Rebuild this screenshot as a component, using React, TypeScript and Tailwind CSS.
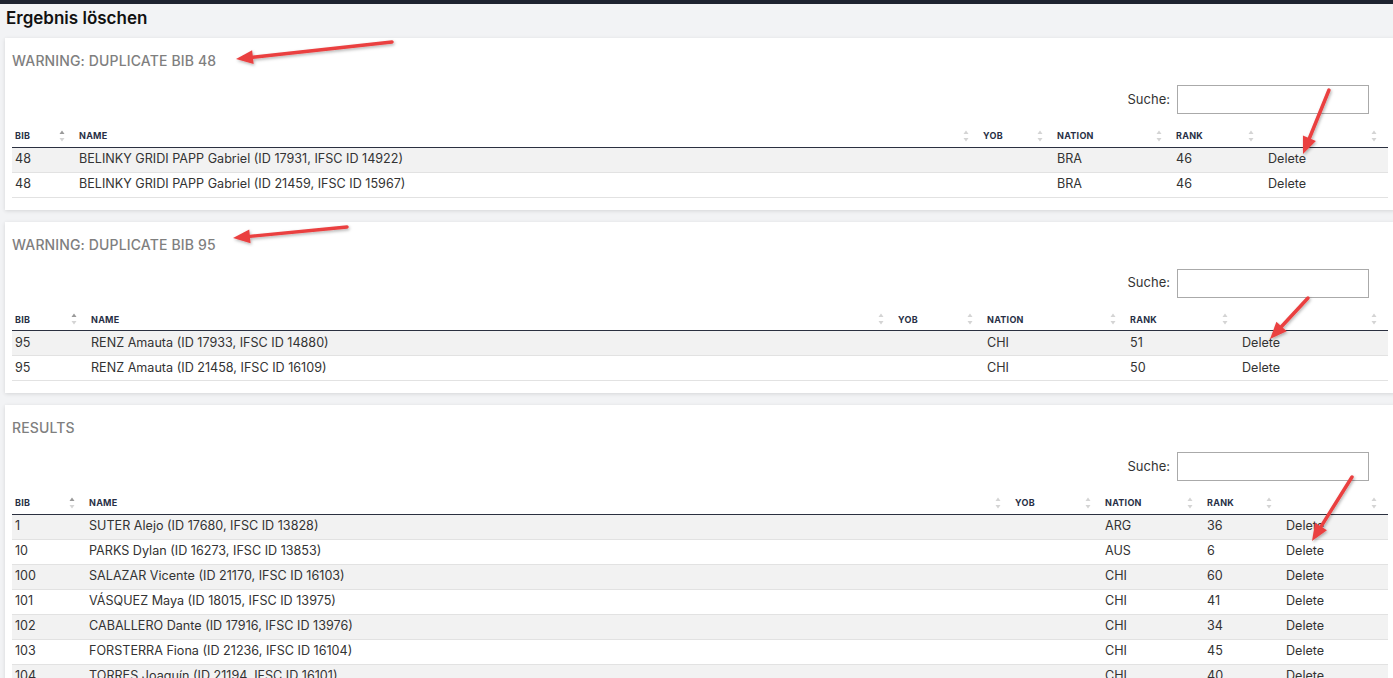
import React from 'react';

type Row = { bib: string; name: string; nation: string; rank: string };

const dup48: Row[] = [
  { bib: '48', name: 'BELINKY GRIDI PAPP Gabriel (ID 17931, IFSC ID 14922)', nation: 'BRA', rank: '46' },
  { bib: '48', name: 'BELINKY GRIDI PAPP Gabriel (ID 21459, IFSC ID 15967)', nation: 'BRA', rank: '46' },
];

const dup95: Row[] = [
  { bib: '95', name: 'RENZ Amauta (ID 17933, IFSC ID 14880)', nation: 'CHI', rank: '51' },
  { bib: '95', name: 'RENZ Amauta (ID 21458, IFSC ID 16109)', nation: 'CHI', rank: '50' },
];

const results: Row[] = [
  { bib: '1', name: 'SUTER Alejo (ID 17680, IFSC ID 13828)', nation: 'ARG', rank: '36' },
  { bib: '10', name: 'PARKS Dylan (ID 16273, IFSC ID 13853)', nation: 'AUS', rank: '6' },
  { bib: '100', name: 'SALAZAR Vicente (ID 21170, IFSC ID 16103)', nation: 'CHI', rank: '60' },
  { bib: '101', name: 'VÁSQUEZ Maya (ID 18015, IFSC ID 13975)', nation: 'CHI', rank: '41' },
  { bib: '102', name: 'CABALLERO Dante (ID 17916, IFSC ID 13976)', nation: 'CHI', rank: '34' },
  { bib: '103', name: 'FORSTERRA Fiona (ID 21236, IFSC ID 16104)', nation: 'CHI', rank: '45' },
  { bib: '104', name: 'TORRES Joaquín (ID 21194, IFSC ID 16101)', nation: 'CHI', rank: '40' },
];

const SortIcon = ({ asc = false }: { asc?: boolean }) => (
  <svg width="6" height="12" viewBox="0 0 6 12" className="absolute right-[11px] top-1/2 -translate-y-1/2">
    <polygon points="3,0.5 5.5,4 0.5,4" fill={asc ? '#9a9a9a' : '#d4d4d4'} />
    <polygon points="0.5,8 5.5,8 3,11.5" fill="#d4d4d4" />
  </svg>
);

const headers = ['Bib', 'Name', 'YOB', 'Nation', 'Rank', ''];

function ResultTable({ title, rows, cols }: { title: string; rows: Row[]; cols: number[] }) {
  return (
    <div className="bg-white w-[1390px] px-[7px] pt-[15px] pb-[12px] shadow-[0_1px_4px_rgba(0,0,0,0.12)]">
      <h2 className="text-[14px] leading-4 font-medium tracking-[0.01em] text-[#7f7f7f] uppercase">{title}</h2>
      <div className="flex justify-end items-center gap-[7px] mt-4 pr-[19px]">
        <label className="text-[13px] text-[#333]">Suche:</label>
        <input className="w-[192px] h-[29px] border border-[#aaa] bg-white outline-none" />
      </div>
      <table className="w-[1376px] table-fixed border-collapse mt-[11px]">
        <colgroup>
          {cols.map((w, i) => <col key={i} style={{ width: w }} />)}
        </colgroup>
        <thead>
          <tr className="h-[22px] border-b border-[#2b3040]">
            {headers.map((h, i) => (
              <th key={i} className="relative text-left pl-[3px] text-[9px] font-bold uppercase tracking-[0.03em] text-[#283046]">
                {h}
                <SortIcon asc={i === 0} />
              </th>
            ))}
          </tr>
        </thead>
        <tbody>
          {rows.map((r, i) => (
            <tr key={i} className={`h-[25px] border-b border-[#e2e2e2] text-[12.6px] text-[#333] ${i % 2 === 0 ? 'bg-[#f2f2f2]' : 'bg-white'}`}>
              <td className="pl-[3px]">{r.bib}</td>
              <td className="pl-[3px] whitespace-nowrap">{r.name}</td>
              <td className="pl-[3px]"></td>
              <td className="pl-[3px]">{r.nation}</td>
              <td className="pl-[3px]">{r.rank}</td>
              <td className="pl-[3px]">Delete</td>
            </tr>
          ))}
        </tbody>
      </table>
    </div>
  );
}

const Arrow = ({ x1, y1, x2, y2 }: { x1: number; y1: number; x2: number; y2: number }) => {
  const a = Math.atan2(y2 - y1, x2 - x1);
  const len = 17, half = 7;
  const bx = x2 - len * Math.cos(a), by = y2 - len * Math.sin(a);
  const px = -Math.sin(a) * half, py = Math.cos(a) * half;
  return (
    <g filter="url(#shadow)">
      <line x1={x1} y1={y1} x2={bx} y2={by} stroke="#ea4040" strokeWidth="3.5" strokeLinecap="round" />
      <polygon points={`${x2},${y2} ${bx + px},${by + py} ${bx - px},${by - py}`} fill="#ea4040" />
    </g>
  );
};

export default function App() {
  return (
    <div className="relative min-h-[678px] bg-[#f2f3f5] overflow-hidden" style={{ fontFamily: 'Inter, "Noto Sans", sans-serif' }}>
      <div className="h-[4px] bg-[#1e2330]" />
      <h1 className="px-[6px] pt-[3px] h-[34px] text-[17px] leading-[22px] font-semibold text-[#111]">Ergebnis löschen</h1>
      <div className="flex flex-col gap-[12px] pl-[5px]">
        <ResultTable title="Warning: duplicate bib 48" rows={dup48} cols={[64, 904, 74, 119, 92, 123]} />
        <ResultTable title="Warning: duplicate bib 95" rows={dup95} cols={[76, 807, 89, 143, 112, 149]} />
        <ResultTable title="Results" rows={results} cols={[74, 926, 90, 102, 79, 105]} />
      </div>
      <svg className="absolute inset-0 pointer-events-none" width="1393" height="678">
        <defs>
          <filter id="shadow" x="-20%" y="-20%" width="140%" height="140%">
            <feDropShadow dx="1" dy="1.5" stdDeviation="1.5" floodColor="#000" floodOpacity="0.3" />
          </filter>
        </defs>
        <Arrow x1={392} y1={42} x2={236} y2={59} />
        <Arrow x1={347} y1={227} x2={233} y2={238} />
        <Arrow x1={1329} y1={90} x2={1303} y2={154} />
        <Arrow x1={1308} y1={298} x2={1270} y2={339} />
        <Arrow x1={1352} y1={477} x2={1312} y2={541} />
      </svg>
    </div>
  );
}
